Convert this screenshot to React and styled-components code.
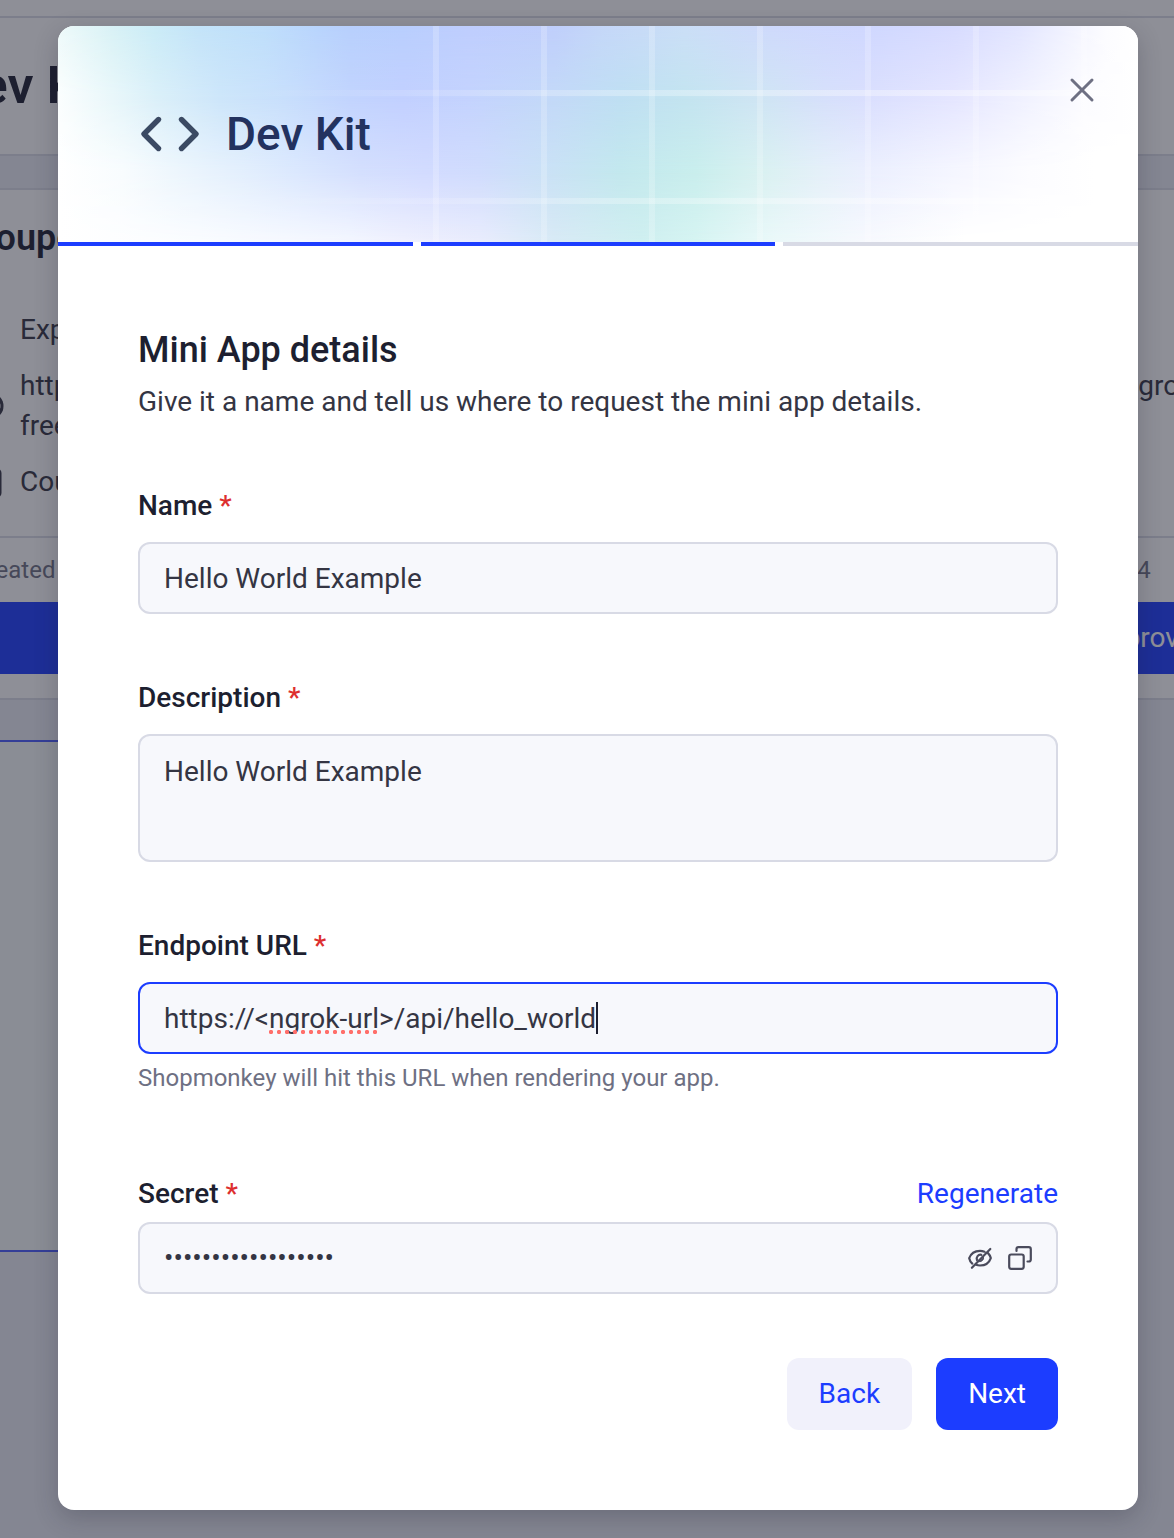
import React from "react";
import styled, { createGlobalStyle } from "styled-components";

const GlobalStyle = createGlobalStyle`
  *, *::before, *::after { box-sizing: border-box; }
  body {
    margin: 0;
    overflow: hidden;
    background: #ebedf4;
    color: #343543;
    font: 28px/40px Roboto, "Liberation Sans", sans-serif;
    -webkit-font-smoothing: antialiased;
  }
  h1, h2, h3, p { margin: 0; }
  button, input, textarea { font: inherit; color: inherit; margin: 0; }
`;

const Stage = styled.div`
  display: grid;
  min-height: 100vh;
  > * { grid-area: 1 / 1; min-width: 0; }
`;

/* ---------- page behind the dialog ---------- */

const Page = styled.div`
  height: 100vh;
  margin-left: -54px;
  overflow: hidden;
  white-space: nowrap;
`;
const TopStrip = styled.div`
  height: 18px;
  background: #fff;
  border-bottom: 2px solid #dbdce6;
`;
const PageHeader = styled.header`
  height: 138px;
  padding-top: 38px;
  background: #fff;
  border-bottom: 2px solid #dbdce6;
  h1 { font-size: 52px; line-height: 60px; font-weight: 600; color: #1d1f30; }
`;
const Cards = styled.div`
  display: grid;
  grid-template-columns: 1fr 348px;
  margin: 32px -150px 40px 18px;
`;
const Card = styled.section`
  height: 512px;
  background: #fff;
  border: solid #dbdce6;
  border-width: 2px 0;
`;
const CardBody = styled.div`
  height: 348px;
  padding: 26px 8px;
  border-bottom: 2px solid #dbdce6;
  h2 { font-size: 36px; line-height: 44px; font-weight: 600; color: #1d1f30; margin-bottom: 50px; }
`;
const Fact = styled.p`
  display: flex;
  align-items: center;
  gap: 16px;
  margin-bottom: 16px;
  svg { width: 32px; height: 32px; flex: none; }
`;
const Created = styled.p`
  padding: 12px 8px;
  font-size: 24px;
  color: #6e7083;
`;
const Approve = styled.button`
  display: block;
  width: 100%;
  height: 72px;
  border: 0;
  background: #1c3dff;
  color: #fff;
`;
const EmptyCard = styled.section`
  height: 512px;
  width: 360px;
  border: 2px solid #4a5cff;
  background: #f6fafa;
`;

/* ---------- dialog ---------- */

const Overlay = styled.div`
  z-index: 1;
  display: flex;
  align-items: flex-start;
  justify-content: center;
  padding: 26px 36px 28px 58px;
  background: rgba(29, 31, 48, 0.5);
`;
const Dialog = styled.div`
  flex: 1;
  min-width: 0;
  border-radius: 16px;
  overflow: hidden;
  background: #fff;
  box-shadow: 0 8px 24px rgba(29, 31, 48, 0.24);
`;

/* The banner blends four horizontal colour bands from top to bottom. */
const BannerArt = styled.div`
  grid-area: 1 / 1;
  display: grid;
  > * { grid-area: 1 / 1; }
`;
const Band = styled.div`
  background: linear-gradient(to right, ${(p) => p.$stops});
  mask-image: linear-gradient(to bottom, #0000 ${(p) => p.$from}%, #000 ${(p) => p.$to}%);
`;
const BannerGrid = styled.div`
  z-index: 1;
  background:
    linear-gradient(to right, #fff0 18%, #fff4 50%, #fff5 80%) 0 64px / 100% 6px no-repeat,
    linear-gradient(to right, #fff0 18%, #fff4 50%, #fff5 80%) 0 172px / 100% 6px no-repeat,
    repeating-linear-gradient(to right, #fff3 0 6px, #fff0 6px 108px) 375px 0 / 100% 100% no-repeat;
`;
const Banner = styled.header`
  display: grid;
  height: 216px;
`;
const BannerContent = styled.div`
  grid-area: 1 / 1;
  z-index: 1;
  display: flex;
  justify-content: space-between;
  padding: 44px 36px 0 80px;
`;
const Brand = styled.div`
  display: flex;
  gap: 24px;
  padding-top: 34px;
  color: #23325f;
  svg { width: 64px; height: 60px; color: #3b4a63; }
  h2 { font-size: 46px; line-height: 60px; font-weight: 500; }
`;
const IconButton = styled.button`
  display: grid;
  place-items: center;
  width: ${(p) => p.$size}px;
  height: ${(p) => p.$size}px;
  padding: 0;
  border: 0;
  background: none;
  color: ${(p) => p.$color};
  cursor: pointer;
  svg { width: 100%; height: 100%; }
`;
const Steps = styled.div`
  display: grid;
  grid-template-columns: repeat(3, 1fr);
  gap: 8px;
`;
const Step = styled.span`
  height: 4px;
  background: ${(p) => (p.$done ? "#1c3dff" : "#d8dae5")};
`;
const Form = styled.form`
  padding: 80px;
`;
const Intro = styled.div`
  margin-bottom: 64px;
  h3 { font-size: 36px; line-height: 48px; font-weight: 500; color: #1d1f30; }
  p { padding-top: 8px; }
`;
const Field = styled.div`
  margin-bottom: ${(p) => p.$gap}px;
`;
const LabelRow = styled.div`
  display: flex;
  justify-content: space-between;
  margin-bottom: ${(p) => p.$gap}px;
  label { font-weight: 500; color: #1d1f30; }
`;
const Star = styled.span`
  color: #dd2f2f;
  font-weight: 500;
`;
const box = `
  width: 100%;
  display: block;
  border: 2px solid #d8dae5;
  border-radius: 12px;
  background: #f7f8fc;
  outline: none;
`;
const Input = styled.input`
  ${box}
  height: 72px;
  padding: 0 24px;
`;
const TextArea = styled.textarea`
  ${box}
  height: 128px;
  padding: 16px 24px;
  resize: none;
`;
const FocusBox = styled.div`
  position: relative;
  input { border-color: #1c3dff; }
`;
/* Spelling marks and caret lie over the text of the focused box. */
const Marks = styled.div`
  position: absolute;
  inset: 0;
  display: flex;
  align-items: center;
  padding: 0 26px;
  color: transparent;
  pointer-events: none;
  mark {
    background: radial-gradient(circle 5px at 2px 2px, #ff6f6a 36%, #ff6f6a00 50%) 0 100% / 8px 4px repeat-x;
    color: inherit;
    line-height: 32px;
  }
`;
const Caret = styled.i`
  width: 2px;
  height: 32px;
  background: #1d1f30;
`;
const Hint = styled.p`
  padding-top: 4px;
  font-size: 24px;
  color: #6e7083;
`;
const Regenerate = styled.button`
  padding: 0;
  border: 0;
  background: none;
  color: #1c3dff;
  cursor: pointer;
`;
const SecretBox = styled.div`
  ${box}
  display: flex;
  align-items: center;
  gap: 16px;
  height: 72px;
  padding: 0 24px;
  input { flex: 1; min-width: 0; padding: 0; border: 0; background: none; outline: none; }
`;
const Actions = styled.div`
  display: flex;
  justify-content: flex-end;
  gap: 24px;
`;
const Button = styled.button`
  height: 72px;
  padding: 0 32px;
  border: 0;
  border-radius: 12px;
  background: ${(p) => (p.$primary ? "#1c3dff" : "#f1f1fb")};
  color: ${(p) => (p.$primary ? "#fff" : "#1c3dff")};
  cursor: pointer;
`;

const bands = [
  { from: -2, to: -1, stops: "#eefafa 0, #d9f2f6 5%, #cbecf7 9%, #c4e4f9 13%, #bfdffb 19%, #b9d5fd 24%, #b8d0fd 27%, #b9cffe 32%, #bfcefe 38%, #c0cffc 46%, #c5d7f9 50%, #cbdff7 58%, #cfdafc 66%, #d0d8ff 75%, #d8dcff 83%, #e3e6ff 89%, #f3f4ff 94%, #fcfcff 97%, #fff 100%" },
  { from: 0, to: 33, stops: "#fbfefe 0, #e9f7fa 5%, #dbf0f9 9%, #cde6fa 15%, #c8dffc 21%, #c2d4fe 27%, #c2d0ff 32%, #c4d3fe 38%, #c3d9f8 46%, #bfdff3 52%, #c3e4f0 58%, #cfe5f4 65%, #d6e0fb 71%, #dadffe 75%, #e5e6ff 83%, #f0f1ff 89%, #fcfcff 95%, #fff 100%" },
  { from: 33, to: 67, stops: "#fff 0, #f8fcfe 6%, #edf6fd 11%, #e3effd 17%, #dbe8fe 22%, #d4dffe 28%, #d2dbff 34%, #d0dcfd 39%, #c9e2f5 46%, #c3e8ee 52%, #c9eeed 59%, #d9f1f1 65%, #e5f0f9 71%, #ebeffe 75%, #f5f6ff 83%, #fcfcff 90%, #fff 96%" },
  { from: 67, to: 100, stops: "#fff 0, #fafcff 13%, #f3f6ff 27%, #eff0fe 32%, #e9ecfd 39%, #d8eaf5 46%, #cfeff0 54%, #d6f4f2 59%, #eaf8f9 66%, #f7f9fe 75%, #fff 84%" },
];

const stroke = { fill: "none", stroke: "currentColor", strokeLinecap: "round", strokeLinejoin: "round" };

const CodeIcon = () => (
  <svg viewBox="0 0 64 60" {...stroke} strokeWidth="5.4" aria-hidden="true">
    <path d="M20.500 15.500 6 30l14.500 14.500M43.500 15.500 58 30 43.500 44.500" />
  </svg>
);
const CloseIcon = () => (
  <svg viewBox="0 0 40 40" {...stroke} strokeWidth="3" aria-hidden="true">
    <path d="m10 10 20 20M30 10 10 30" />
  </svg>
);
const EyeOffIcon = () => (
  <svg viewBox="0 0 24 24" {...stroke} strokeWidth="2.200" aria-hidden="true">
    <path d="M4.300 17.600C2.700 16.200 1.600 14.300 1.200 12.200 2.800 7.600 7.100 4.800 12 4.800c1.600 0 3.100.3 4.500.9M20 7.100c1.300 1.300 2.300 3 2.800 5-1.600 4.600-5.900 7.400-10.800 7.400-1.400 0-2.700-.2-3.900-.7M22.300 3 3.900 21.800" />
    <path d="M9 14A3.800 3.800 0 0 1 13.300 8.800" />
    <path d="M15.600 11.500A3.800 3.800 0 0 1 11.500 15.700Z" fill="currentColor" strokeWidth="1" />
  </svg>
);
const CopyIcon = () => (
  <svg viewBox="0 0 24 24" {...stroke} strokeWidth="2.200" aria-hidden="true">
    <rect x="1.200" y="8.500" width="14.500" height="14.300" rx="2" />
    <path d="M8.500 5V3.200a2 2 0 0 1 2-2H20.800a2 2 0 0 1 2 2v10.300a2 2 0 0 1-2 2h-1.300" />
  </svg>
);
const GlobeIcon = () => (
  <svg viewBox="0 0 32 32" {...stroke} strokeWidth="3" aria-hidden="true">
    <circle cx="18" cy="16" r="12" />
    <path d="M7 12h22M7 20h22M18 4c-7 7-7 17 0 24M18 4c10 7 10 17 0 24" />
  </svg>
);
const BoxIcon = () => (
  <svg viewBox="0 0 32 32" {...stroke} strokeWidth="3" aria-hidden="true">
    <rect x="4" y="4" width="24" height="26" rx="3" />
  </svg>
);

function Label({ id, children, gap = 16, action }) {
  return (
    <LabelRow $gap={gap}>
      <label htmlFor={id}>{children} <Star>*</Star></label>
      {action}
    </LabelRow>
  );
}

function AppCard({ url, created, action }) {
  return (
    <Card>
      <CardBody>
        <h2>Coupon</h2>
        <Fact><svg />Expires</Fact>
        <Fact><GlobeIcon /><span>{url}<br />free</span></Fact>
        <Fact><BoxIcon />Coupon</Fact>
      </CardBody>
      <Created>{created}</Created>
      <Approve type="button">{action}</Approve>
    </Card>
  );
}

export default function App() {
  return (
    <Stage>
      <GlobalStyle />
      <Page aria-hidden="true">
        <TopStrip />
        <PageHeader><h1>Dev Kit</h1></PageHeader>
        <Cards>
          <AppCard url="https" created="Created" action="Approve" />
          <AppCard url="https://ngrok" created="Created 5/2024" action="Approved" />
        </Cards>
        <EmptyCard />
      </Page>
      <Overlay>
        <Dialog role="dialog" aria-modal="true" aria-labelledby="title">
          <Banner>
            <BannerArt aria-hidden="true">
              {bands.map((b) => <Band key={b.to} $from={b.from} $to={b.to} $stops={b.stops} />)}
              <BannerGrid />
            </BannerArt>
            <BannerContent>
              <Brand><CodeIcon /><h2 id="title">Dev Kit</h2></Brand>
              <IconButton type="button" aria-label="Close" $size={40} $color="#6e7083"><CloseIcon /></IconButton>
            </BannerContent>
          </Banner>
          <Steps><Step $done /><Step $done /><Step /></Steps>
          <Form onSubmit={(e) => e.preventDefault()}>
            <Intro>
              <h3>Mini App details</h3>
              <p>Give it a name and tell us where to request the mini app details.</p>
            </Intro>
            <Field $gap={64}>
              <Label id="name">Name</Label>
              <Input id="name" defaultValue="Hello World Example" />
            </Field>
            <Field $gap={64}>
              <Label id="description">Description</Label>
              <TextArea id="description" defaultValue="Hello World Example" />
            </Field>
            <Field $gap={76}>
              <Label id="url">Endpoint URL</Label>
              <FocusBox>
                <Input id="url" defaultValue="https://<ngrok-url>/api/hello_world" />
                <Marks aria-hidden="true">
                  <span>https://&lt;<mark>ngrok-url</mark>&gt;/api/hello_world</span><Caret />
                </Marks>
              </FocusBox>
              <Hint>Shopmonkey will hit this URL when rendering your app.</Hint>
            </Field>
            <Field $gap={64}>
              <Label id="secret" gap={8} action={<Regenerate type="button">Regenerate</Regenerate>}>Secret</Label>
              <SecretBox>
                <input id="secret" type="password" defaultValue="abcdefghijklmnopqr" />
                <IconButton type="button" aria-label="Show secret" $size={24} $color="#4a4b5c"><EyeOffIcon /></IconButton>
                <IconButton type="button" aria-label="Copy secret" $size={24} $color="#4a4b5c"><CopyIcon /></IconButton>
              </SecretBox>
            </Field>
            <Actions>
              <Button type="button">Back</Button>
              <Button type="submit" $primary>Next</Button>
            </Actions>
          </Form>
        </Dialog>
      </Overlay>
    </Stage>
  );
}
